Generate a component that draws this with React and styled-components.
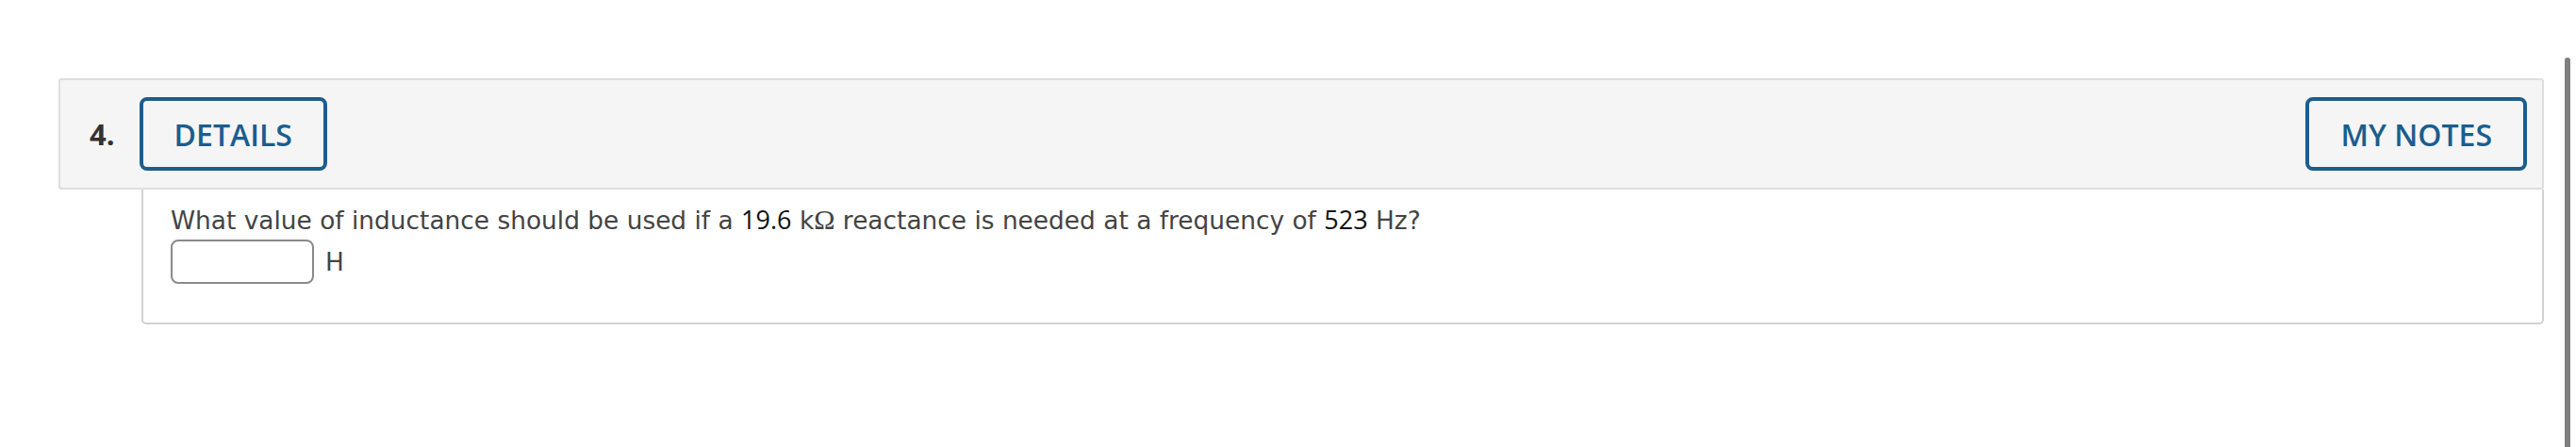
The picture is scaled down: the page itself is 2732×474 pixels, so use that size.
import styled, { createGlobalStyle } from 'styled-components';

const GlobalStyle = createGlobalStyle`
    html, body {
        margin: 0;
        padding: 0;
        background: #fff;
    }

    body {
        font-family: "DejaVu Sans", Verdana, sans-serif;
        overflow: hidden;
    }
`;

const Page = styled.div`
    padding: 83px 34px 0 62px;
`;

const QuestionHeader = styled.div`
    display: flex;
    align-items: center;
    height: 118px;
    box-sizing: border-box;
    padding: 0 16px 0 31px;
    background: #f5f5f5;
    border: 2px solid #dedede;
    border-radius: 3px;
`;

const QuestionNumber = styled.span`
    font-family: "Open Sans", sans-serif;
    font-size: 31px;
    font-weight: 700;
    color: #333;
    margin-right: 26px;
`;

const OutlineButton = styled.button`
    height: 78px;
    box-sizing: border-box;
    padding: 0 33px;
    margin-left: ${({ $pushRight }) => ($pushRight ? 'auto' : '0')};
    background: transparent;
    border: 4px solid #1b5d8e;
    border-radius: 8px;
    color: #1b5d8e;
    font-family: "Open Sans", sans-serif;
    font-size: 32px;
    font-weight: 600;
    cursor: pointer;
`;

const QuestionBody = styled.div`
    margin-left: 88px;
    padding: 16px 29px 41px 29px;
    border: 2px solid #d2d2d2;
    border-top: none;
    border-radius: 0 0 5px 5px;
`;

const Prompt = styled.p`
    margin: 0;
    font-size: 26.4px;
    line-height: 32px;
    color: #444;
`;

const Num = styled.span`
    font-family: "Open Sans", sans-serif;
    font-size: 27px;
    color: #111;
`;

const Omega = styled.span`
    font-family: "Liberation Serif", serif;
    font-size: 30px;
`;

const AnswerRow = styled.div`
    display: flex;
    align-items: center;
    gap: 12px;
    margin-top: 4px;
`;

const AnswerInput = styled.input`
    width: 152px;
    height: 47px;
    box-sizing: border-box;
    margin: 0;
    border: 2px solid #8a8a8a;
    border-radius: 8px;
    background: #fff;
    font-size: 22px;
`;

const Unit = styled.span`
    font-size: 26.4px;
    color: #444;
`;

const ScrollThumb = styled.div`
    position: fixed;
    top: 61px;
    bottom: 0;
    left: 2720px;
    width: 6px;
    border-radius: 3px 3px 0 0;
    background: #7f7f7f;
`;

const App = () => {
    return (
        <>
            <GlobalStyle />
            <Page>
                <QuestionHeader>
                    <QuestionNumber>4.</QuestionNumber>
                    <OutlineButton>DETAILS</OutlineButton>
                    <OutlineButton $pushRight>MY NOTES</OutlineButton>
                </QuestionHeader>
                <QuestionBody>
                    <Prompt>
                        What value of inductance should be used if a <Num>19.6</Num> k<Omega>Ω</Omega> reactance is needed at a frequency of <Num>523</Num> Hz?
                    </Prompt>
                    <AnswerRow>
                        <AnswerInput type="text" />
                        <Unit>H</Unit>
                    </AnswerRow>
                </QuestionBody>
            </Page>
            <ScrollThumb />
        </>
    );
};

export default App;
